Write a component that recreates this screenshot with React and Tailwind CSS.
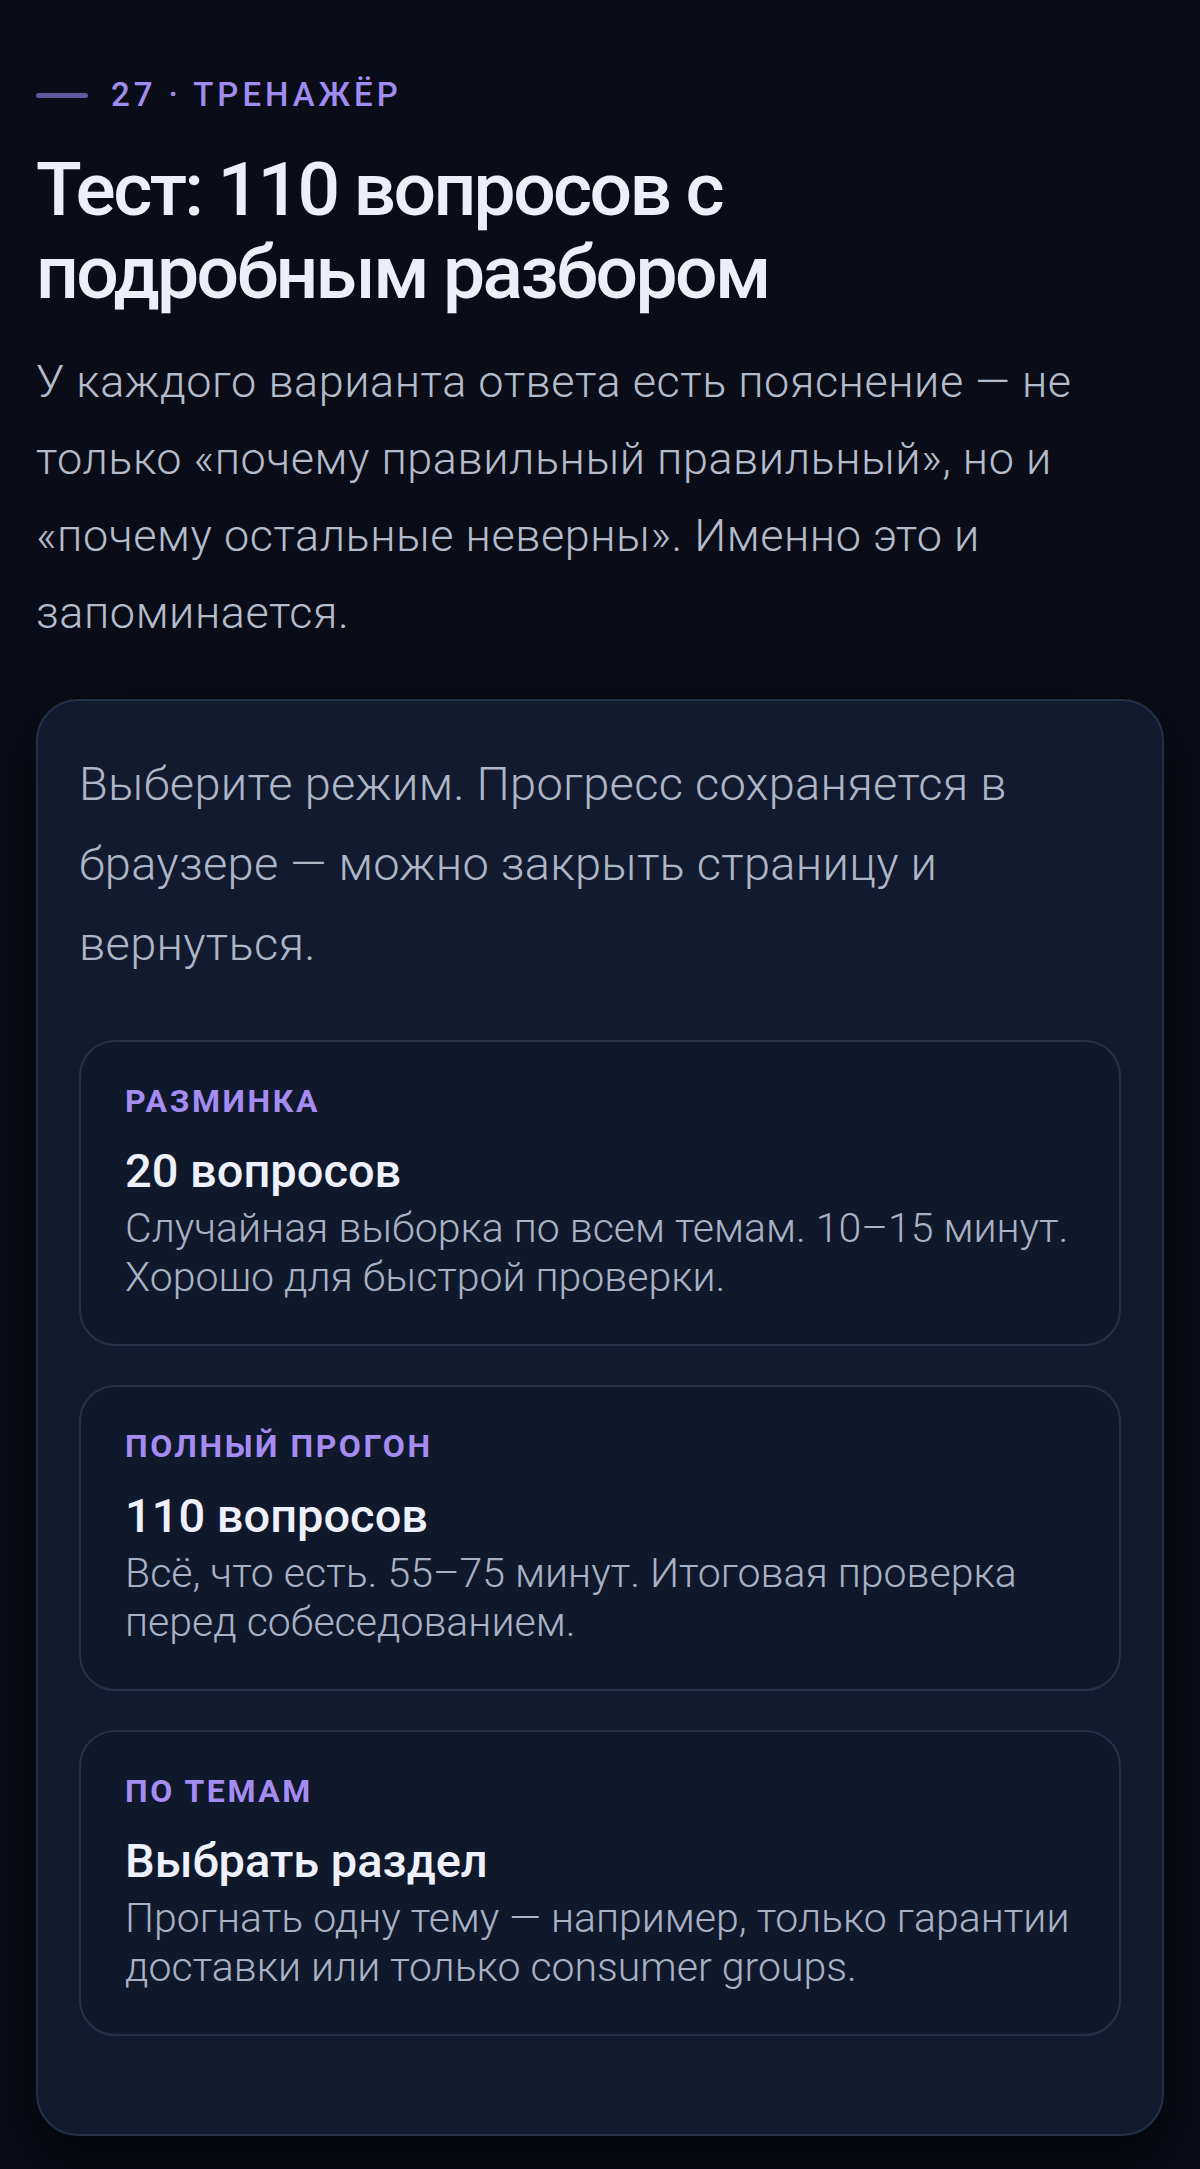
export default function App() {
  const cards = [
    {
      label: "РАЗМИНКА",
      title: "20 вопросов",
      l1: "Случайная выборка по всем темам. 10–15 минут.",
      l2: "Хорошо для быстрой проверки.",
    },
    {
      label: "ПОЛНЫЙ ПРОГОН",
      title: "110 вопросов",
      l1: "Всё, что есть. 55–75 минут. Итоговая проверка",
      l2: "перед собеседованием.",
    },
    {
      label: "ПО ТЕМАМ",
      title: "Выбрать раздел",
      l1: "Прогнать одну тему — например, только гарантии",
      l2: "доставки или только consumer groups.",
    },
  ];
  return (
    <div
      className="min-h-[2169px] w-[1200px] bg-[#0a0d17] px-[36px] pt-[75px] pb-[36px]"
      style={{ fontFamily: "Roboto, 'Noto Sans', Arial, sans-serif" }}
    >
      <div className="flex items-center h-[40px]">
        <div className="w-[52px] h-[5px] rounded-full bg-[#62589e]" />
        <div className="ml-[23px] text-[33px] leading-[40px] font-medium tracking-[0.12em] text-[#a08cf0]">
          27 · ТРЕНАЖЁР
        </div>
      </div>
      <h1 className="mt-[33px] text-[75px] leading-[83px] font-medium tracking-[-0.035em] text-[#eceffa]">
        Тест: 110 вопросов с<br />подробным разбором
      </h1>
      <p className="mt-[29px] text-[45px] leading-[77px] font-light tracking-[0.012em] text-[#b4bccb]">
        У каждого варианта ответа есть пояснение — не<br />
        только «почему правильный правильный», но и<br />
        «почему остальные неверны». Именно это и<br />
        запоминается.
      </p>
      <div className="mt-[48px] rounded-[42px] border-2 border-[#253049] bg-[#111a2e] px-[41px] pt-[43px] pb-[98px] shadow-[0_24px_60px_rgba(0,0,0,0.55)]">
        <p className="text-[47px] leading-[80px] font-light tracking-[0.006em] text-[#aeb6c6]">
          Выберите режим. Прогресс сохраняется в<br />
          браузере — можно закрыть страницу и<br />
          вернуться.
        </p>
        <div className="mt-[56px] flex flex-col gap-[39px]">
          {cards.map((c) => (
            <div
              key={c.label}
              className="rounded-[36px] border-2 border-[#263149] bg-[#10192c] pl-[44px] pr-[30px] pt-[37px] pb-[42px]"
            >
              <div className="text-[32px] leading-[44px] font-bold tracking-[0.08em] text-[#a58cf2]">
                {c.label}
              </div>
              <div className="mt-[19px] text-[47px] leading-[57px] font-medium text-[#eef1fb]">
                {c.title}
              </div>
              <div className="mt-[5px] text-[41px] leading-[49px] font-light text-[#a9b2c4]">
                {c.l1}
                <br />
                {c.l2}
              </div>
            </div>
          ))}
        </div>
      </div>
    </div>
  );
}
